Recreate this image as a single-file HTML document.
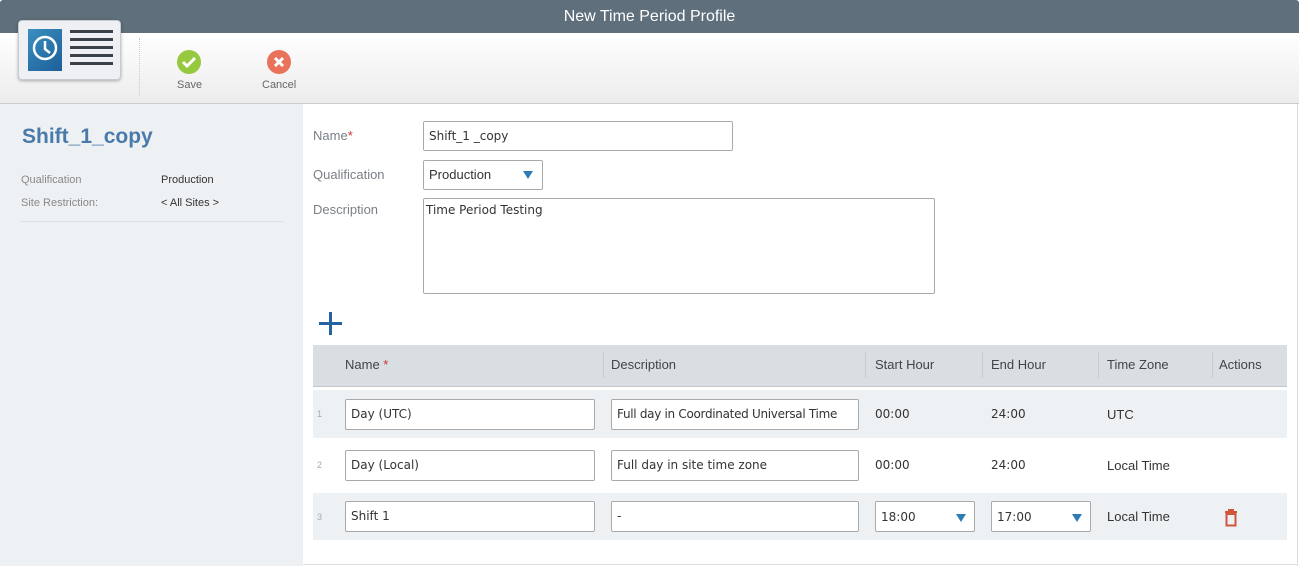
<!DOCTYPE html>
<html><head><style>
*{box-sizing:border-box;margin:0;padding:0}
body{width:1299px;height:566px;overflow:hidden;font-family:"Liberation Sans",Arial,sans-serif;background:#fff;position:relative;color:#333}
.abs{position:absolute}
.hdr{left:0;top:0;width:1299px;height:33px;background:#5f6f7b;color:#fff;font-size:16px;text-align:center;line-height:33px;border-radius:3px 3px 0 0}
.tb{left:0;top:33px;width:1299px;height:71px;background:linear-gradient(#fff,#ececec);border-bottom:1px solid #c9cdd1}
.left{left:0;top:104px;width:303px;height:462px;background:#eef1f4}
.inp{position:absolute;border:1px solid #a9a9a9;background:#fff;font-family:"DejaVu Sans",sans-serif;font-size:12px;color:#333;padding-left:5px;border-radius:2px;white-space:nowrap;overflow:hidden}
.lbl{position:absolute;font-size:13px;color:#7a7f85}
.th{position:absolute;font-size:13px;color:#444;top:357px}
.cell{position:absolute;font-size:13px;color:#333}
.tri{position:absolute;width:0;height:0;border-left:5px solid transparent;border-right:5px solid transparent;border-top:8px solid #2f7cb5}
</style></head><body>
<div class="abs hdr">New Time Period Profile</div>
<div class="abs tb"></div>
<div class="abs" style="left:18px;top:20px;width:103px;height:60px;background:#eef0f3;border:1px solid #c6cbd0;border-radius:4px;box-shadow:0 1px 3px rgba(0,0,0,.3)"></div>
<div class="abs" style="left:28px;top:29px;width:34px;height:42px;background:linear-gradient(135deg,#3a8fc0,#1d5e99)"></div>
<svg class="abs" style="left:31px;top:34px" width="28" height="28"><circle cx="14" cy="14" r="11" fill="none" stroke="#fff" stroke-width="2.5"/><path d="M14 7v8l5 4" stroke="#fff" stroke-width="2.5" fill="none"/></svg>
<div class="abs" style="left:70px;top:30px;width:43px;height:40px;background:repeating-linear-gradient(#3b4148 0 3px,transparent 3px 8px)"></div>
<div class="abs" style="left:139px;top:38px;height:58px;border-left:1px dotted #ccc"></div>
<svg class="abs" style="left:177px;top:50px" width="24" height="24"><circle cx="12" cy="12" r="12" fill="#96c93d"/><path d="M6 12l4 4 8-8" stroke="#fff" stroke-width="3" fill="none"/></svg>
<div class="abs" style="left:177px;top:79px;font-size:11px;color:#666">Save</div>
<svg class="abs" style="left:267px;top:50px" width="24" height="24"><circle cx="12" cy="12" r="12" fill="#e8735a"/><path d="M8 8l8 8M16 8l-8 8" stroke="#fff" stroke-width="3"/></svg>
<div class="abs" style="left:262px;top:79px;font-size:11px;color:#666">Cancel</div>
<div class="abs left"></div>
<div class="abs" style="left:22px;top:125px;font-size:21px;font-weight:bold;color:#4a7aaa">Shift_1_copy</div>
<div class="abs" style="left:21px;top:174px;font-size:11px;color:#888">Qualification</div>
<div class="abs" style="left:161px;top:174px;font-size:11px;color:#333">Production</div>
<div class="abs" style="left:21px;top:197px;font-size:11px;color:#888">Site Restriction:</div>
<div class="abs" style="left:161px;top:197px;font-size:11px;color:#333">&lt; All Sites &gt;</div>
<div class="abs" style="left:20px;top:221px;width:263px;border-top:1px solid #dde1e5"></div>
<div class="abs" style="left:1297px;top:104px;height:462px;border-left:1px solid #ddd"></div>
<div class="abs" style="left:303px;top:564px;width:995px;border-top:1px solid #ddd"></div>

<div class="lbl" style="left:313px;top:128px">Name<span style="color:#c33">*</span></div>
<div class="inp" style="left:423px;top:121px;width:310px;height:30px;line-height:28px">Shift_1 _copy</div>
<div class="lbl" style="left:313px;top:167px">Qualification</div>
<div class="inp" style="left:423px;top:160px;width:120px;height:30px;line-height:28px;font-family:'Liberation Sans',sans-serif;font-size:13px">Production</div>
<div class="tri" style="left:523px;top:171px"></div>
<div class="lbl" style="left:313px;top:202px">Description</div>
<div class="inp" style="left:423px;top:198px;width:512px;height:96px;padding-top:4px;padding-left:2px">Time Period Testing</div>
<svg class="abs" style="left:318px;top:311px" width="25" height="25"><path d="M12.5 1v23M1 12.5h23" stroke="#2462a0" stroke-width="3"/></svg>

<div class="abs" style="left:313px;top:345px;width:974px;height:42px;background:#d8dee2;border-bottom:1px solid #c0c6cb"></div>
<div class="abs" style="left:603px;top:352px;height:26px;border-left:1px solid #c6ccd0"></div>
<div class="abs" style="left:865px;top:352px;height:26px;border-left:1px solid #c6ccd0"></div>
<div class="abs" style="left:982px;top:352px;height:26px;border-left:1px solid #c6ccd0"></div>
<div class="abs" style="left:1098px;top:352px;height:26px;border-left:1px solid #c6ccd0"></div>
<div class="abs" style="left:1212px;top:352px;height:26px;border-left:1px solid #c6ccd0"></div>
<div class="th" style="left:345px">Name <span style="color:#c33">*</span></div>
<div class="th" style="left:611px">Description</div>
<div class="th" style="left:875px">Start Hour</div>
<div class="th" style="left:991px">End Hour</div>
<div class="th" style="left:1107px">Time Zone</div>
<div class="th" style="left:1219px">Actions</div>

<div class="abs" style="left:313px;top:390px;width:974px;height:48px;background:#eef1f4"></div>
<div class="abs" style="left:313px;top:493px;width:974px;height:47px;background:#eef1f4"></div>

<div class="abs" style="left:317px;top:409px;font-size:9px;color:#aaa">1</div>
<div class="inp" style="left:345px;top:399px;width:250px;height:31px;line-height:29px">Day (UTC)</div>
<div class="inp" style="left:611px;top:399px;width:248px;height:31px;line-height:29px;letter-spacing:-0.3px">Full day in Coordinated Universal Time</div>
<div class="cell" style="left:875px;top:407px;font-family:'DejaVu Sans',sans-serif;font-size:12px">00:00</div>
<div class="cell" style="left:991px;top:407px;font-family:'DejaVu Sans',sans-serif;font-size:12px">24:00</div>
<div class="cell" style="left:1107px;top:407px">UTC</div>

<div class="abs" style="left:317px;top:460px;font-size:9px;color:#aaa">2</div>
<div class="inp" style="left:345px;top:450px;width:250px;height:31px;line-height:29px">Day (Local)</div>
<div class="inp" style="left:611px;top:450px;width:248px;height:31px;line-height:29px">Full day in site time zone</div>
<div class="cell" style="left:875px;top:458px;font-family:'DejaVu Sans',sans-serif;font-size:12px">00:00</div>
<div class="cell" style="left:991px;top:458px;font-family:'DejaVu Sans',sans-serif;font-size:12px">24:00</div>
<div class="cell" style="left:1107px;top:458px">Local Time</div>

<div class="abs" style="left:317px;top:512px;font-size:9px;color:#aaa">3</div>
<div class="inp" style="left:345px;top:501px;width:250px;height:31px;line-height:29px">Shift 1</div>
<div class="inp" style="left:611px;top:501px;width:248px;height:31px;line-height:29px">-</div>
<div class="inp" style="left:875px;top:501px;width:100px;height:31px;line-height:31px">18:00</div>
<div class="tri" style="left:956px;top:514px"></div>
<div class="inp" style="left:991px;top:501px;width:100px;height:31px;line-height:31px">17:00</div>
<div class="tri" style="left:1072px;top:514px"></div>
<div class="cell" style="left:1107px;top:509px">Local Time</div>
<svg class="abs" style="left:1224px;top:509px" width="14" height="18"><path d="M1 3h12M5 3V1h4v2M2.5 5h9v11.5h-9z" stroke="#d0553a" stroke-width="2" fill="none"/></svg>
</body></html>
